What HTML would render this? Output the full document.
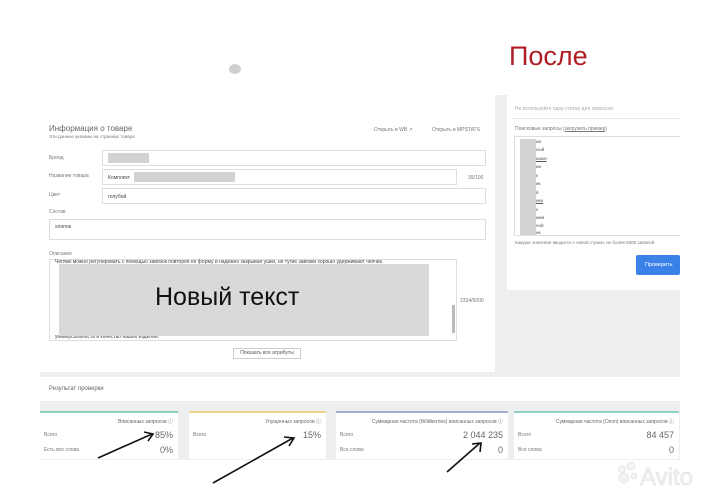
<!DOCTYPE html>
<html><head><meta charset="utf-8"><style>
*{margin:0;padding:0;box-sizing:border-box}
body{width:720px;height:497px;background:#fff;position:relative;overflow:hidden;font-family:"Liberation Sans",sans-serif;color:#555}
.a{position:absolute}
.g{background:#eceeef}
.w{background:#fff}
.t{font-size:5px;color:#777;white-space:nowrap}
.in{position:absolute;border:1px solid #ddd;background:#fff}
.bl{background:#d2d2d2;position:absolute}
.card{position:absolute;top:411px;height:48px;background:#fff;border-top:2px solid}
.card .h{position:absolute;right:5px;top:5px;font-size:5px;color:#666}
.card .l{position:absolute;left:4px;font-size:5px;color:#777}
.card .v{position:absolute;right:5px;font-size:9px;color:#666}
.kw{position:absolute;left:536px;font-size:4.5px;color:#555}
</style></head><body>
<div class="a" style="left:229px;top:64px;width:12px;height:10px;border-radius:50%;background:#d0d0d0"></div>
<div class="a" style="left:509px;top:41px;font-size:27px;color:#b01e25">После</div>

<div class="a g" style="left:40px;top:95px;width:640px;height:365px"></div>
<div class="a w" style="left:40px;top:95px;width:455px;height:277px"></div>
<div class="a w" style="left:507px;top:95px;width:173px;height:195px"></div>

<div class="a" style="left:49px;top:124px;font-size:8px;color:#666">Информация о товаре</div>
<div class="a t" style="left:49px;top:134px;font-size:4.5px">Эти данные указаны на странице товара</div>
<div class="a t" style="left:374px;top:127px">Открыть в WB ↗</div>
<div class="a t" style="left:432px;top:127px">Открыть в MPSTATS</div>

<div class="a t" style="left:49px;top:155px">Бренд</div>
<div class="in" style="left:102px;top:150px;width:384px;height:16px"></div>
<div class="bl" style="left:108px;top:153px;width:41px;height:10px"></div>
<div class="a t" style="left:49px;top:173px">Название товара</div>
<div class="in" style="left:102px;top:169px;width:355px;height:16px"></div>
<div class="a t" style="left:108px;top:175px;color:#444">Комплект</div>
<div class="bl" style="left:134px;top:172px;width:101px;height:10px"></div>
<div class="a t" style="left:468px;top:175px">39/100</div>
<div class="a t" style="left:49px;top:192px">Цвет</div>
<div class="in" style="left:102px;top:188px;width:384px;height:16px"></div>
<div class="a t" style="left:108px;top:194px;color:#444">голубой</div>
<div class="a t" style="left:49px;top:209px">Состав</div>
<div class="in" style="left:49px;top:219px;width:437px;height:21px"></div>
<div class="a t" style="left:55px;top:224px;color:#444">хлопок</div>
<div class="a t" style="left:49px;top:251px">Описание</div>
<div class="in" style="left:49px;top:259px;width:408px;height:82px"></div>
<div class="a t" style="left:55px;top:259px;color:#444">Чепчик можно регулировать с помощью завязок повторяя ее форму и надежно закрывая ушки, не тугие завязки хорошо удерживают чепчик.</div>
<div class="a t" style="left:55px;top:334px;color:#444">универсальность и качество наших изделий.</div>
<div class="a" style="left:452px;top:305px;width:3px;height:28px;background:#bbb"></div>
<div class="a" style="left:59px;top:264px;width:370px;height:72px;background:#d9d9d9"></div>
<div class="a" style="left:155px;top:283px;font-size:25px;color:#111">Новый текст</div>
<div class="a t" style="left:460px;top:298px">2334/5000</div>
<div class="a" style="left:233px;top:348px;width:68px;height:11px;border:1px solid #ccc;font-size:5px;color:#555;text-align:center;line-height:9px">Показать все атрибуты</div>

<div class="a t" style="left:515px;top:106px;color:#aaa">Не используйте одну строку для запросов</div>
<div class="a" style="left:513px;top:118px;width:167px;height:1px;background:#e6e6e6"></div>
<div class="a t" style="left:515px;top:126px">Поисковые запросы (<u>загрузить пример</u>)</div>
<div class="in" style="left:514px;top:136px;width:166px;height:100px;border-right:none"></div>
<div class="bl" style="left:520px;top:139px;width:16px;height:96px"></div>
<div class="kw" style="top:139px">ии</div><div class="kw" style="top:147px">ный</div><div class="kw" style="top:156px"><u>ашки</u></div><div class="kw" style="top:164px">ии</div><div class="kw" style="top:173px">к</div><div class="kw" style="top:181px">ик</div><div class="kw" style="top:190px">й</div><div class="kw" style="top:198px"><u>ики</u></div><div class="kw" style="top:207px">к</div><div class="kw" style="top:215px">ими</div><div class="kw" style="top:223px">ной</div><div class="kw" style="top:230px">ик</div>
<div class="a t" style="left:515px;top:240px;font-size:4.5px">Каждое значение вводится с новой строки, не более 5000 записей</div>
<div class="a" style="left:636px;top:255px;width:44px;height:20px;background:#3b82e8;border-radius:2px;color:#fff;font-size:5.5px;line-height:20px;padding-left:9px">Проверить</div>

<div class="a w" style="left:40px;top:377px;width:640px;height:24px"></div>
<div class="a" style="left:49px;top:386px;font-size:6px;color:#666">Результат проверки</div>

<div class="card" style="left:40px;width:138px;border-color:#8fcfb2"><div class="h">Вписанных запросов ⓘ</div><div class="l" style="top:19px">Всего</div><div class="v" style="top:17px">85%</div><div class="l" style="top:34px">Есть все слова</div><div class="v" style="top:32px">0%</div></div>
<div class="card" style="left:189px;width:137px;border-color:#f0d48a"><div class="h">Упущенных запросов ⓘ</div><div class="l" style="top:19px">Всего</div><div class="v" style="top:17px">15%</div></div>
<div class="card" style="left:336px;width:172px;border-color:#a6aed0"><div class="h">Суммарная частота (Wildberries) вписанных запросов ⓘ</div><div class="l" style="top:19px">Всего</div><div class="v" style="top:17px">2 044 235</div><div class="l" style="top:34px">Все слова</div><div class="v" style="top:32px">0</div></div>
<div class="card" style="left:514px;width:165px;border-color:#8fcfc4"><div class="h">Суммарная частота (Ozon) вписанных запросов ⓘ</div><div class="l" style="top:19px">Всего</div><div class="v" style="top:17px">84 457</div><div class="l" style="top:34px">Все слова</div><div class="v" style="top:32px">0</div></div>

<svg class="a" style="left:0;top:0" width="720" height="497">
<g stroke="#111" stroke-width="1.6" fill="none">
<line x1="98" y1="458" x2="152" y2="434"/><polyline points="144,432 153,434 148,441"/>
<line x1="213" y1="483" x2="293" y2="438"/><polyline points="284,437 294,438 289,446"/>
<line x1="447" y1="472" x2="480" y2="443"/><polyline points="472,444 481,443 480,452"/>
</g>
<g fill="#f3f3f3" stroke="#dcdcdc" stroke-width="0.6">
<circle cx="622" cy="469" r="3.5"/><circle cx="631" cy="466" r="4"/><circle cx="624" cy="478" r="5"/><circle cx="634" cy="476" r="3"/>
<text x="640" y="485" font-family="Liberation Sans" font-size="24">Avito</text>
</g>
</svg>
</body></html>
